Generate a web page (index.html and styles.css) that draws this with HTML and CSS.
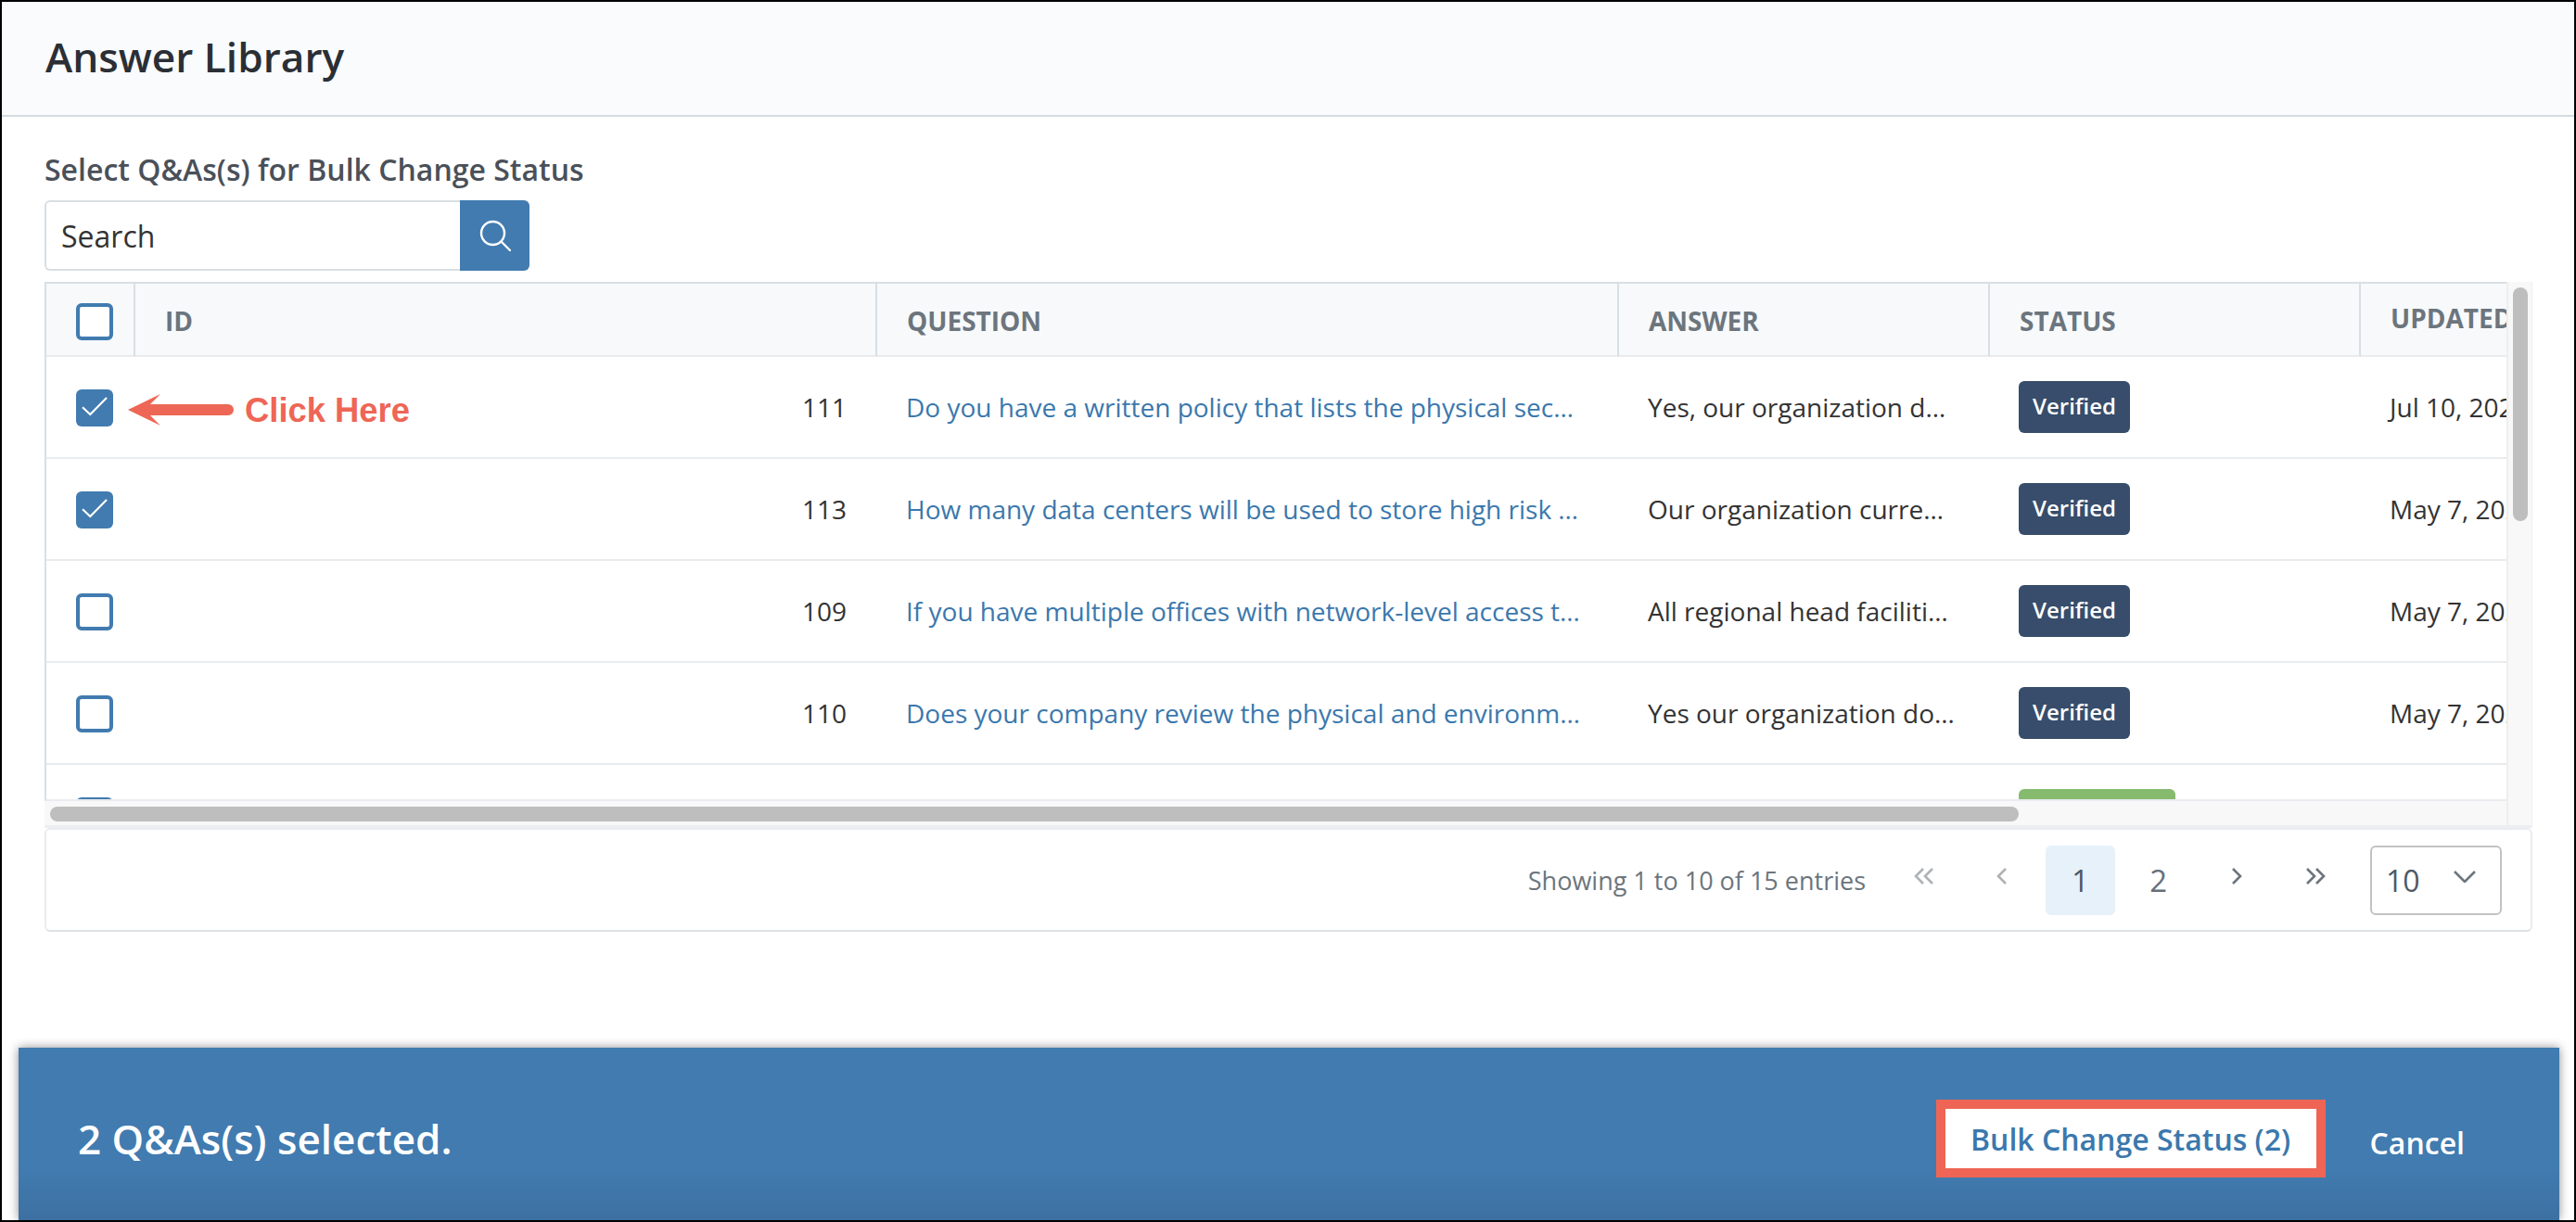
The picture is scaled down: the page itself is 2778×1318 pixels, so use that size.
FILE: index.html
```html
<!DOCTYPE html>
<html lang="en">
<head>
<meta charset="utf-8">
<title>Answer Library</title>
<link rel="stylesheet" href="styles.css">
</head>
<body>
<div class="frame">
  <header class="page-header"><h1 class="page-title">Answer Library</h1></header>
  <main class="content">
    <div class="section-label">Select Q&amp;As(s) for Bulk Change Status</div>
    <div class="search">
      <div class="search-input">Search</div>
      <div class="search-btn">
        <svg class="search-icon" viewBox="0 0 34 34"><circle cx="14.5" cy="14.5" r="12.5"/><path d="M23.5 23.5L33 33"/></svg>
      </div>
    </div>
    <div class="table-wrap">
      <div class="table-view">
        <table class="grid">
          <colgroup><col class="c-check"><col class="c-id"><col class="c-q"><col class="c-a"><col class="c-s"><col class="c-u"></colgroup>
          <thead>
            <tr>
              <th class="check-cell head-check"><span class="box"></span></th>
              <th>ID</th><th>QUESTION</th><th>ANSWER</th><th>STATUS</th><th class="head-updated">UPDATED</th>
            </tr>
          </thead>
          <tbody>
            <tr>
              <td class="check-cell">
                <span class="box checked"><svg class="tick" viewBox="0 0 40 40"><path d="M7 19.3L15.3 27L33 9"/></svg></span>
                <div class="note">
                  <svg class="note-arrow" viewBox="0 0 114 34"><path d="M0 17L35 0L24 11H108a6 6 0 0 1 0 12H24L35 34Z"/></svg>
                  <span class="note-text">Click Here</span>
                </div>
              </td>
              <td class="id-cell">111</td>
              <td><span class="q-link">Do you have a written policy that lists the physical sec…</span></td>
              <td>Yes, our organization d…</td>
              <td><span class="badge">Verified</span></td>
              <td>Jul 10, 2024</td>
            </tr>
            <tr>
              <td class="check-cell"><span class="box checked"><svg class="tick" viewBox="0 0 40 40"><path d="M7 19.3L15.3 27L33 9"/></svg></span></td>
              <td class="id-cell">113</td>
              <td><span class="q-link">How many data centers will be used to store high risk …</span></td>
              <td>Our organization curre…</td>
              <td><span class="badge">Verified</span></td>
              <td>May 7, 2024</td>
            </tr>
            <tr>
              <td class="check-cell"><span class="box"></span></td>
              <td class="id-cell">109</td>
              <td><span class="q-link">If you have multiple offices with network-level access t…</span></td>
              <td>All regional head faciliti…</td>
              <td><span class="badge">Verified</span></td>
              <td>May 7, 2024</td>
            </tr>
            <tr>
              <td class="check-cell"><span class="box"></span></td>
              <td class="id-cell">110</td>
              <td><span class="q-link">Does your company review the physical and environm…</span></td>
              <td>Yes our organization do…</td>
              <td><span class="badge">Verified</span></td>
              <td>May 7, 2024</td>
            </tr>
            <tr>
              <td class="check-cell"><span class="box"></span></td>
              <td class="id-cell"></td>
              <td></td>
              <td></td>
              <td><span class="badge badge-green"></span></td>
              <td></td>
            </tr>
          </tbody>
        </table>
      </div>
      <div class="vtrack"><div class="vthumb"></div></div>
      <div class="htrack"><div class="hthumb"></div></div>
    </div>
    <div class="pager-card">
      <span class="entries">Showing 1 to 10 of 15 entries</span>
      <div class="pager">
        <span class="page-item"><svg class="chev-double off" viewBox="0 0 22 18"><path d="M10 1L2 9L10 17M20 1L12 9L20 17"/></svg></span>
        <span class="page-item"><svg class="chev off" viewBox="0 0 12 18"><path d="M10 1L2 9L10 17"/></svg></span>
        <span class="page-item active">1</span>
        <span class="page-item">2</span>
        <span class="page-item"><svg class="chev" viewBox="0 0 12 18"><path d="M2 1L10 9L2 17"/></svg></span>
        <span class="page-item"><svg class="chev-double" viewBox="0 0 22 18"><path d="M2 1L10 9L2 17M12 1L20 9L12 17"/></svg></span>
      </div>
      <div class="size-select"><span>10</span><svg class="select-chev" viewBox="0 0 24 13"><path d="M1 1L12 12L23 1"/></svg></div>
    </div>
  </main>
  <footer class="action-bar">
    <span class="selected-text">2 Q&amp;As(s) selected.</span>
    <div class="actions">
      <span class="bulk-btn">Bulk Change Status (2)</span>
      <span class="cancel-btn">Cancel</span>
    </div>
  </footer>
</div>
</body>
</html>
```
FILE: styles.css
```css
* { box-sizing: border-box; }
html, body { margin: 0; padding: 0; background: #fff; }
body { font-family: "Open Sans", "Noto Sans", sans-serif; overflow: hidden; }

.frame {
  width: 2778px;
  height: 1318px;
  border: 2px solid #000;
  display: flex;
  flex-direction: column;
  background: #fff;
}

.page-header {
  height: 124px;
  flex: none;
  background: #f9fbfd;
  border-bottom: 2px solid #d3dde1;
  display: flex;
  align-items: center;
  padding-left: 47px;
}
.page-title { margin: -4px 0 0; font-size: 44.2px; font-weight: 600; color: #2b2f35; line-height: 60px; }

.content { flex: none; padding: 37px 45px 0 46px; }
.section-label { font-size: 32px; font-weight: 600; color: #4a5059; line-height: 40px; }

.search { display: flex; width: 523px; height: 76px; margin-top: 13px; }
.search-input {
  flex: 1;
  border: 2px solid #d8dfe3;
  border-right: 0;
  border-radius: 6px 0 0 6px;
  font-size: 32px;
  color: #333;
  display: flex;
  align-items: center;
  padding-left: 16px;
}
.search-btn {
  width: 75px;
  background: #417bb0;
  border-radius: 0 6px 6px 0;
  display: flex;
  align-items: center;
  justify-content: center;
}
.search-icon { width: 34px; height: 34px; fill: none; stroke: #fff; stroke-width: 2.4; stroke-linecap: round; }

.table-wrap {
  margin-top: 12px;
  height: 589px;
  display: grid;
  grid-template-columns: 2655px 28px;
  grid-template-rows: 560px 26px;
  background: #f8f8f8;
  border-bottom: 3px solid #eeeef2;
}
.table-view {
  overflow: hidden;
  background: #fff;
  border-top: 2px solid #d8dfe3;
  border-left: 2px solid #d8dfe3;
  border-bottom: 2px solid #e9ecef;
}
.grid { border-collapse: separate; border-spacing: 0; table-layout: fixed; width: 2896px; }
.c-check { width: 96px; }
.c-id, .c-q { width: 800px; }
.c-a, .c-s, .c-u { width: 400px; }

.grid th {
  height: 79px;
  background: #f7f9fb;
  border-bottom: 2px solid #e9ecef;
  border-right: 2px solid #d8dfe3;
  text-align: left;
  font-size: 28px;
  font-weight: 700;
  color: #6c757d;
  padding: 2px 0 0 32px;
  white-space: nowrap;
}
.grid th.head-updated { padding-bottom: 4px; padding-top: 0; }
.grid td {
  height: 110px;
  border-bottom: 2px solid #e9ecef;
  font-size: 28px;
  color: #333;
  padding: 0 0 0 31px;
  white-space: nowrap;
  overflow: hidden;
}
.grid td.check-cell, .grid th.check-cell { padding: 2px 0 0 32px; position: relative; overflow: visible; }
.grid th.head-check { padding-top: 4px; }
.grid td.id-cell { text-align: right; padding: 0 33px 0 0; }

.box {
  display: block;
  width: 40px;
  height: 40px;
  border: 4px solid #417bb0;
  border-radius: 6px;
  background: #fff;
}
.box.checked { border: 0; background: #417bb0; }
.tick { display: block; width: 40px; height: 40px; fill: none; stroke: #fff; stroke-width: 2.2; }

.note { position: absolute; left: 88px; top: 6px; bottom: 0; display: flex; align-items: center; gap: 12px; }
.note-arrow { width: 114px; height: 34px; fill: #ee6655; flex: none; }
.note-text { font-family: "Liberation Sans", Arial, sans-serif; font-weight: 700; font-size: 36.4px; color: #ee6655; line-height: 1; padding-top: 2px; }

.q-link { color: #3b78ad; }
.badge {
  display: inline-block;
  width: 120px;
  height: 56px;
  line-height: 54px;
  text-align: center;
  border-radius: 6px;
  background: #374d6b;
  color: #fff;
  font-size: 24px;
  font-weight: 600;
  vertical-align: middle;
}
.badge-green { width: 169px; background: #86bb6f; }

.vtrack { grid-column: 2; grid-row: 1 / span 2; border-left: 2px solid #eeeeee; border-right: 1px solid #eeeeee; padding: 6px 0 0 5px; }
.vthumb { width: 16px; height: 252px; border-radius: 8px; background: #bebebe; }
.htrack { grid-column: 1; grid-row: 2; padding: 6px 0 0 6px; }
.hthumb { width: 2123px; height: 16px; border-radius: 8px; background: #bebebe; }

.pager-card {
  height: 112px;
  border: 2px solid #e9ecef;
  border-bottom-color: #dde2e6;
  border-radius: 6px;
  display: flex;
  align-items: center;
  justify-content: flex-end;
  padding-right: 31px;
}
.entries { font-size: 27px; color: #6c757d; margin-right: 25px; }
.pager { display: flex; gap: 9.4px; }
.page-item {
  width: 75px;
  height: 75px;
  border-radius: 6px;
  display: flex;
  align-items: center;
  justify-content: center;
  font-size: 33px;
  color: #66707b;
}
.page-item.active { background: #e6f1fa; color: #4f5965; }
.chev { width: 12px; height: 18px; margin-bottom: 9px; fill: none; stroke: #6c757d; stroke-width: 2.6; }
.chev-double { width: 22px; height: 18px; margin-bottom: 9px; fill: none; stroke: #6c757d; stroke-width: 2.6; }
.chev.off, .chev-double.off { stroke: #aeb2b5; }
.size-select {
  width: 142px;
  height: 75px;
  margin-left: 22px;
  border: 2px solid #c2c2c2;
  border-radius: 6px;
  display: flex;
  align-items: center;
  justify-content: space-between;
  padding: 0 26px 0 15px;
  font-size: 32px;
  color: #4f5965;
}
.select-chev { width: 24px; height: 13px; margin-bottom: 8px; fill: none; stroke: #6c757d; stroke-width: 2.6; }

.action-bar {
  margin: auto 16px 0 18px;
  height: 186px;
  flex: none;
  background: linear-gradient(#417bb0 0, #417bb0 70%, #3d70a1 100%);
  box-shadow: 0 0 10px rgba(0, 0, 0, .45);
  display: flex;
  align-items: center;
  justify-content: space-between;
  padding: 10px 102px 0 64px;
  color: #fff;
}
.selected-text { font-size: 44px; font-weight: 600; }
.actions { display: flex; align-items: center; gap: 48px; }
.bulk-btn {
  width: 420px;
  height: 84px;
  border: 10px solid #ee6555;
  background: #fff;
  color: #3b78ad;
  font-size: 32px;
  font-weight: 600;
  display: flex;
  align-items: center;
  justify-content: center;
}
.cancel-btn { font-size: 32px; font-weight: 600; padding-top: 8px; }
```
